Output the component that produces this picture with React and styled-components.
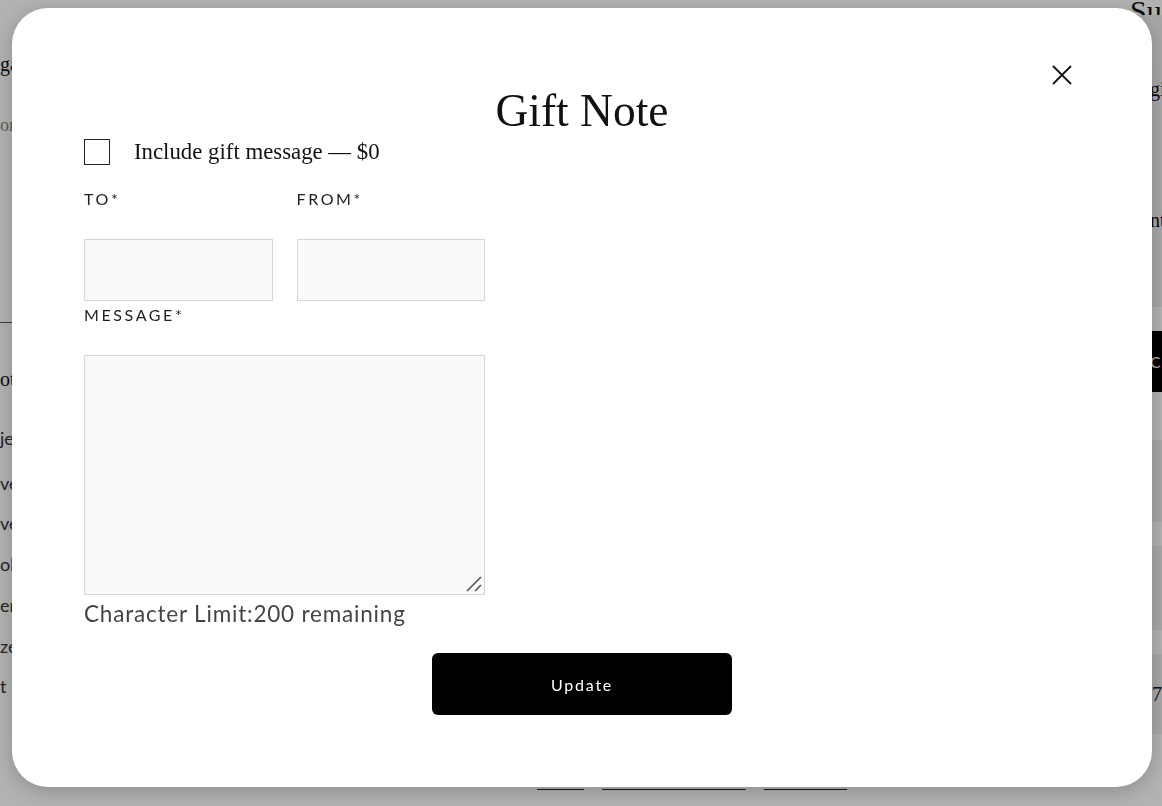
import React from "react";
import styled, { createGlobalStyle } from "styled-components";

const Global = createGlobalStyle`
  html, body { margin: 0; padding: 0; overflow: hidden; }
  body { background: #fff; font-family: "Lato", "Liberation Sans", sans-serif; }
  * { box-sizing: border-box; }
`;

const Page = styled.div`
  display: flex;
  width: 1162px;
  height: 806px;
  overflow: hidden;
`;

const MainCol = styled.div`
  width: 1128px;
  flex-shrink: 0;
  display: flex;
  flex-direction: column;
`;

const BgHeading = styled.div`
  margin-top: ${(p) => p.$mt}px;
  font-family: "Liberation Serif", serif;
  font-size: 20px;
  line-height: 24px;
  color: #111;
  white-space: nowrap;
`;

const BgMuted = styled.div`
  margin-top: ${(p) => p.$mt}px;
  font-family: "Liberation Serif", serif;
  font-size: 18px;
  line-height: 22px;
  color: #888;
  white-space: nowrap;
`;

const BgRule = styled.hr`
  margin: ${(p) => p.$mt}px 0 0;
  border: 0;
  border-top: 1px solid #555;
  width: 100%;
`;

const BgListItem = styled.div`
  margin-top: ${(p) => p.$mt}px;
  font-family: "Lato", sans-serif;
  font-size: 18px;
  line-height: 22px;
  color: #333;
  white-space: nowrap;
`;

const BgLinks = styled.div`
  margin-top: ${(p) => p.$mt}px;
  padding-left: 537px;
  display: flex;
  gap: 18px;
  flex-shrink: 0;
`;

const BgLink = styled.a`
  font-family: "Lato", sans-serif;
  font-size: 15px;
  line-height: 18px;
  letter-spacing: 3.5px;
  color: #222;
  text-decoration: underline;
  text-underline-offset: 4px;
`;

const SideCol = styled.div`
  width: 320px;
  flex-shrink: 0;
  display: flex;
  flex-direction: column;
`;

const SideTitle = styled.div`
  padding-left: 2px;
  font-family: "Liberation Serif", serif;
  font-size: 30px;
  line-height: 22px;
  height: 15px;
  color: #111;
`;

const SidePanel = styled.div`
  background: #f0f0f0;
  height: 292px;
  padding: 63px 0 0 22px;
  display: flex;
  flex-direction: column;
  gap: 108px;
  font-family: "Liberation Serif", serif;
  font-size: 20px;
  color: #111;
`;

const SideButton = styled.div`
  margin-top: 24px;
  height: 61px;
  background: #000;
  color: #fff;
  display: flex;
  align-items: center;
  padding-left: 22px;
  font-family: "Lato", sans-serif;
  font-size: 16px;
  letter-spacing: 2px;
`;

const SideCard = styled.div`
  margin-top: ${(p) => p.$mt}px;
  height: ${(p) => p.$h}px;
  background: #f0f0f0;
  display: flex;
  align-items: center;
  padding-left: 14px;
  font-family: "Liberation Serif", serif;
  font-size: 20px;
  color: #111;
`;

const Overlay = styled.div`
  position: fixed;
  inset: 0;
  background: rgba(0, 0, 0, 0.3);
  display: flex;
  justify-content: center;
  align-items: flex-start;
  padding: 8px 0 0 2px;
`;

const Modal = styled.div`
  position: relative;
  width: 1140px;
  background: #fff;
  border-radius: 36px;
  box-shadow: 0 4px 22px rgba(0, 0, 0, 0.22);
  padding: 80px 72px 72px;
  display: flex;
  flex-direction: column;
`;

const CloseButton = styled.button`
  position: absolute;
  top: 55px;
  right: 78px;
  width: 24px;
  height: 24px;
  padding: 0;
  border: 0;
  background: transparent;
  display: flex;
  align-items: center;
  justify-content: center;
  cursor: pointer;
`;

const Title = styled.h2`
  margin: 0;
  text-align: center;
  font-family: "Liberation Serif", serif;
  font-weight: 400;
  font-size: 45.5px;
  line-height: 46px;
  color: #111;
`;

const Form = styled.div`
  width: 401px;
  display: flex;
  flex-direction: column;
`;

const CheckRow = styled.label`
  margin-top: 5px;
  height: 26px;
  display: flex;
  align-items: center;
  gap: 24px;
  font-family: "Liberation Serif", serif;
  font-size: 22.8px;
  color: #111;
  white-space: nowrap;
`;

const CheckBox = styled.span`
  width: 26px;
  height: 26px;
  border: 1.5px solid #222;
  flex-shrink: 0;
`;

const FieldRow = styled.div`
  margin-top: 24px;
  display: grid;
  grid-template-columns: 1fr 1fr;
  gap: 24px;
`;

const Field = styled.div`
  display: flex;
  flex-direction: column;
  margin-top: ${(p) => p.$mt || 0}px;
`;

const Label = styled.span`
  font-family: "Lato", sans-serif;
  font-size: 16px;
  line-height: 20px;
  letter-spacing: 2.6px;
  color: #222;
  margin-bottom: ${(p) => p.$gap}px;
`;

const TextInput = styled.input`
  display: block;
  width: 100%;
  height: 62px;
  margin: 0;
  background: #fafafa;
  border: 1px solid #d5d5d5;
  border-radius: 0;
  outline: none;
`;

const AreaWrap = styled.div`
  position: relative;
`;

const TextArea = styled.textarea`
  display: block;
  width: 100%;
  height: 240px;
  margin: 0;
  background: #fafafa;
  border: 1px solid #d5d5d5;
  border-radius: 0;
  outline: none;
  resize: none;
`;

const Grip = styled.svg`
  position: absolute;
  right: 2px;
  bottom: 2px;
  pointer-events: none;
`;

const CharLimit = styled.div`
  margin-top: 6px;
  font-family: "Lato", sans-serif;
  font-size: 22.5px;
  line-height: 26px;
  letter-spacing: 0.8px;
  color: #444;
  white-space: nowrap;
`;

const UpdateButton = styled.button`
  align-self: center;
  margin-top: 26px;
  width: 300px;
  height: 62px;
  border: 0;
  border-radius: 6px;
  background: #000;
  color: #fff;
  font-family: "Lato", sans-serif;
  font-size: 16px;
  letter-spacing: 1.8px;
  cursor: pointer;
`;

export default function App() {
  return (
    <>
      <Global />
      <Page>
        <MainCol>
          <BgHeading $mt={52}>garden party set</BgHeading>
          <BgMuted $mt={38}>original print, framed</BgMuted>
          <BgRule $mt={186} />
          <BgHeading $mt={44}>other details</BgHeading>
          <BgListItem $mt={36}>jewelry box</BgListItem>
          <BgListItem $mt={23}>velvet lining</BgListItem>
          <BgListItem $mt={18}>vessel</BgListItem>
          <BgListItem $mt={19}>okra dye</BgListItem>
          <BgListItem $mt={19}>ermine trim</BgListItem>
          <BgListItem $mt={19}>zebra wood</BgListItem>
          <BgListItem $mt={18}>t light</BgListItem>
          <BgLinks $mt={73}>
            <BgLink>EDIT</BgLink>
            <BgLink>GIFT OPTIONS</BgLink>
            <BgLink>REMOVE</BgLink>
          </BgLinks>
        </MainCol>
        <SideCol>
          <SideTitle>Summary</SideTitle>
          <SidePanel>
            <span>gift box</span>
            <span>nt. tax</span>
          </SidePanel>
          <SideButton>Checkout</SideButton>
          <SideCard $mt={48} $h={82} />
          <SideCard $mt={24} $h={84} />
          <SideCard $mt={24} $h={80}>17</SideCard>
        </SideCol>
      </Page>
      <Overlay>
        <Modal>
          <CloseButton aria-label="Close">
            <svg width="22" height="22" viewBox="0 0 22 22">
              <path d="M2 2 L20 20 M20 2 L2 20" stroke="#111" strokeWidth="1.8" fill="none" />
            </svg>
          </CloseButton>
          <Title>Gift Note</Title>
          <Form>
            <CheckRow>
              <CheckBox />
              Include gift message — $0
            </CheckRow>
            <FieldRow>
              <Field>
                <Label $gap={30}>TO*</Label>
                <TextInput />
              </Field>
              <Field>
                <Label $gap={30}>FROM*</Label>
                <TextInput />
              </Field>
            </FieldRow>
            <Field $mt={4}>
              <Label $gap={30}>MESSAGE*</Label>
              <AreaWrap>
                <TextArea />
                <Grip width="18" height="18" viewBox="0 0 18 18">
                  <path d="M2 16 L16 2 M10 16 L16 10" stroke="#555" strokeWidth="1.6" fill="none" />
                </Grip>
              </AreaWrap>
            </Field>
            <CharLimit>Character Limit:200 remaining</CharLimit>
          </Form>
          <UpdateButton>Update</UpdateButton>
        </Modal>
      </Overlay>
    </>
  );
}
